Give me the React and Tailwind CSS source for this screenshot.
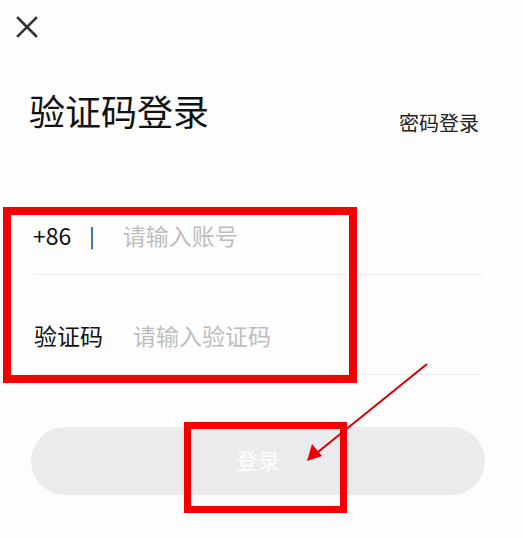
import React from "react";

export default function App() {
  const font = { fontFamily: '"Noto Sans CJK SC", "Noto Sans", sans-serif' };
  return (
    <div className="relative w-[523px] h-[538px] overflow-hidden bg-[#fdfdfd] text-[#111]" style={font}>
      <div className="pt-[16px] pl-[16px]">
        <svg width="22" height="22" viewBox="0 0 22 22">
          <path d="M2 2 L20 20 M20 2 L2 20" stroke="#333" strokeWidth="2.6" strokeLinecap="square" fill="none" />
        </svg>
      </div>
      <div className="flex items-end justify-between pl-[29px] pr-[44px] mt-[54px]">
        <div className="text-[36px] leading-[36px]">验证码登录</div>
        <div className="text-[20px] leading-[20px] mb-[-5px] text-[#222]">密码登录</div>
      </div>
      <div className="ml-[33px] w-[449px] mt-[73px]">
        <div className="flex items-center h-[74px] pb-[4px] border-b border-[#eeeeee] text-[23px]">
          <span className="text-[23px]">+86</span>
          <span className="ml-[18px] text-[20px] text-[#222]">|</span>
          <span className="ml-[28px] text-[#bdbdbd]">请输入账号</span>
        </div>
        <div className="flex items-center h-[74px] pb-[4px] mt-[26px] border-b border-[#eeeeee] text-[23px]">
          <span className="ml-[1px]">验证码</span>
          <span className="ml-[30px] text-[#bdbdbd]">请输入验证码</span>
        </div>
      </div>
      <div className="ml-[31px] mt-[52px] w-[454px] h-[68px] pb-[4px] rounded-full bg-[#ebebed] flex items-center justify-center">
        <span className="text-white text-[22px]">登录</span>
      </div>

      <div className="absolute left-[3px] top-[207px] w-[354px] h-[176px] border-[8px] border-[#f50000]" />
      <div className="absolute left-[184px] top-[422px] w-[163px] h-[91px] border-[7px] border-[#f50000]" />
      <svg className="absolute left-0 top-0" width="523" height="538" viewBox="0 0 523 538">
        <line x1="427" y1="364" x2="318" y2="452" stroke="#d40000" strokeWidth="2" />
        <polygon points="307,461 312,444 322,456" fill="#ee0000" />
      </svg>
    </div>
  );
}
